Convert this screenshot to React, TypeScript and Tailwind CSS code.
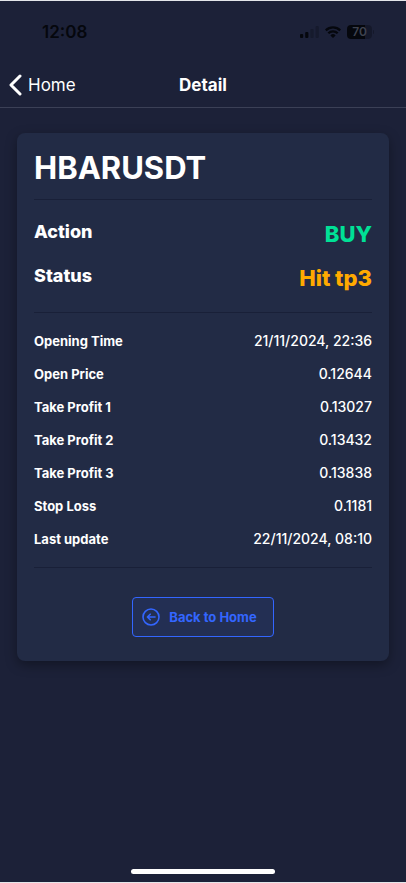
import { useState } from 'react';

const signal = {
  symbol: 'HBARUSDT',
  action: 'BUY',
  status: 'Hit tp3',
};

const details = [
  { label: 'Opening Time', value: '21/11/2024, 22:36' },
  { label: 'Open Price', value: '0.12644' },
  { label: 'Take Profit 1', value: '0.13027' },
  { label: 'Take Profit 2', value: '0.13432' },
  { label: 'Take Profit 3', value: '0.13838' },
  { label: 'Stop Loss', value: '0.1181' },
  { label: 'Last update', value: '22/11/2024, 08:10' },
];

function StatusBar() {
  return (
    <div className="flex h-[61px] items-center justify-between pl-[42px] pr-8 text-[#05070d]">
      <span className="text-[17px] leading-5 font-semibold">12:08</span>
      <div className="flex items-center gap-[6px]">
        <svg width="19" height="12" viewBox="0 0 19 12" fill="currentColor" aria-hidden="true">
          <rect x="0" y="8" width="3.200" height="4" rx="1" />
          <rect x="5.200" y="6" width="3.200" height="6" rx="1" />
          <rect x="10.400" y="3" width="3.200" height="9" rx="1" opacity="0.25" />
          <rect x="15.600" y="0" width="3.200" height="12" rx="1" opacity="0.25" />
        </svg>
        <svg width="16" height="12" viewBox="0 0 16 12" fill="none" stroke="currentColor" strokeWidth="2.300" aria-hidden="true">
          <path d="M0.800 4.400a10.300 10.300 0 0 1 14.400 0" />
          <path d="M3.300 7.300a6.700 6.700 0 0 1 9.400 0" />
          <path d="M8 12L5.400 9.400a3.700 3.700 0 0 1 5.200 0z" fill="currentColor" stroke="none" />
        </svg>
        <div className="flex items-center gap-px">
          <span className="flex h-[14px] w-[25px] items-center justify-center rounded-[4px] bg-linear-to-r from-[#05070d] from-72% to-[#14182a] to-72% text-[12px] leading-[14px] font-semibold text-[#3f4350]">
            70
          </span>
          <span className="h-1 w-px rounded-r bg-[#14182a]" />
        </div>
      </div>
    </div>
  );
}

function Header({ onBack }: { onBack: () => void }) {
  return (
    <header className="grid h-[46px] grid-cols-3 items-center border-b border-[#3b4056] px-2 text-[17px] leading-5 text-white">
      <button onClick={onBack} className="flex items-center gap-[6px] justify-self-start">
        <svg width="14" height="22" viewBox="0 0 14 22" fill="none" stroke="currentColor" strokeWidth="3" strokeLinecap="round" strokeLinejoin="round" aria-hidden="true">
          <path d="M12 2L3 11l9 9" />
        </svg>
        Home
      </button>
      <h1 className="text-center font-bold">Detail</h1>
    </header>
  );
}

export default function App() {
  const [screen, setScreen] = useState('Detail');
  const goHome = () => setScreen('Home');

  return (
    <div className="flex min-h-screen flex-col border-y border-[#e4e6ea] bg-[#1c2138] font-['Inter',sans-serif]" data-screen={screen}>
      <StatusBar />
      <Header onBack={goHome} />
      <main className="flex-1 px-[17px] pt-[25px]">
        <section className="rounded-lg bg-[#222b45] px-[17px] pt-[15px] pb-6 text-white shadow-[0_4px_12px_rgba(0,0,0,0.35)]">
          <h2 className="text-[31px] leading-10 font-bold">{signal.symbol}</h2>
          <hr className="mt-[11px] border-[#192038]" />
          <dl className="py-3">
            <div className="flex items-start justify-between py-[6px]">
              <dt className="text-[18px] leading-7 font-extrabold">Action</dt>
              <dd className="text-[22px] leading-8 font-extrabold text-[#00e096]">{signal.action}</dd>
            </div>
            <div className="flex items-start justify-between py-[6px]">
              <dt className="text-[18px] leading-7 font-extrabold">Status</dt>
              <dd className="text-[22px] leading-8 font-extrabold text-[#ffaa00]">{signal.status}</dd>
            </div>
          </dl>
          <hr className="border-[#192038]" />
          <dl className="pt-[11px] pb-3">
            {details.map(item => (
              <div key={item.label} className="flex h-[33px] items-center justify-between">
                <dt className="text-[13px] leading-5 font-bold">{item.label}</dt>
                <dd className="text-[14px] leading-5 font-medium">{item.value}</dd>
              </div>
            ))}
          </dl>
          <hr className="border-[#192038]" />
          <button
            onClick={goHome}
            className="mx-auto mt-[29px] flex h-10 items-center gap-2 rounded-[4px] border border-[#3366ff] bg-[#3366ff]/8 pr-4 pl-2 text-[13px] leading-5 font-bold text-[#3366ff]"
          >
            <svg width="20" height="20" viewBox="0 0 20 20" fill="none" stroke="currentColor" strokeWidth="1.600" strokeLinecap="round" strokeLinejoin="round" aria-hidden="true">
              <circle cx="10" cy="10" r="8" />
              <path d="M14 10H6.500M9.200 7.200L6.400 10l2.800 2.800" />
            </svg>
            Back to Home
          </button>
        </section>
      </main>
      <div className="mx-auto mb-2 h-[5px] w-36 rounded-full bg-white" />
    </div>
  );
}
